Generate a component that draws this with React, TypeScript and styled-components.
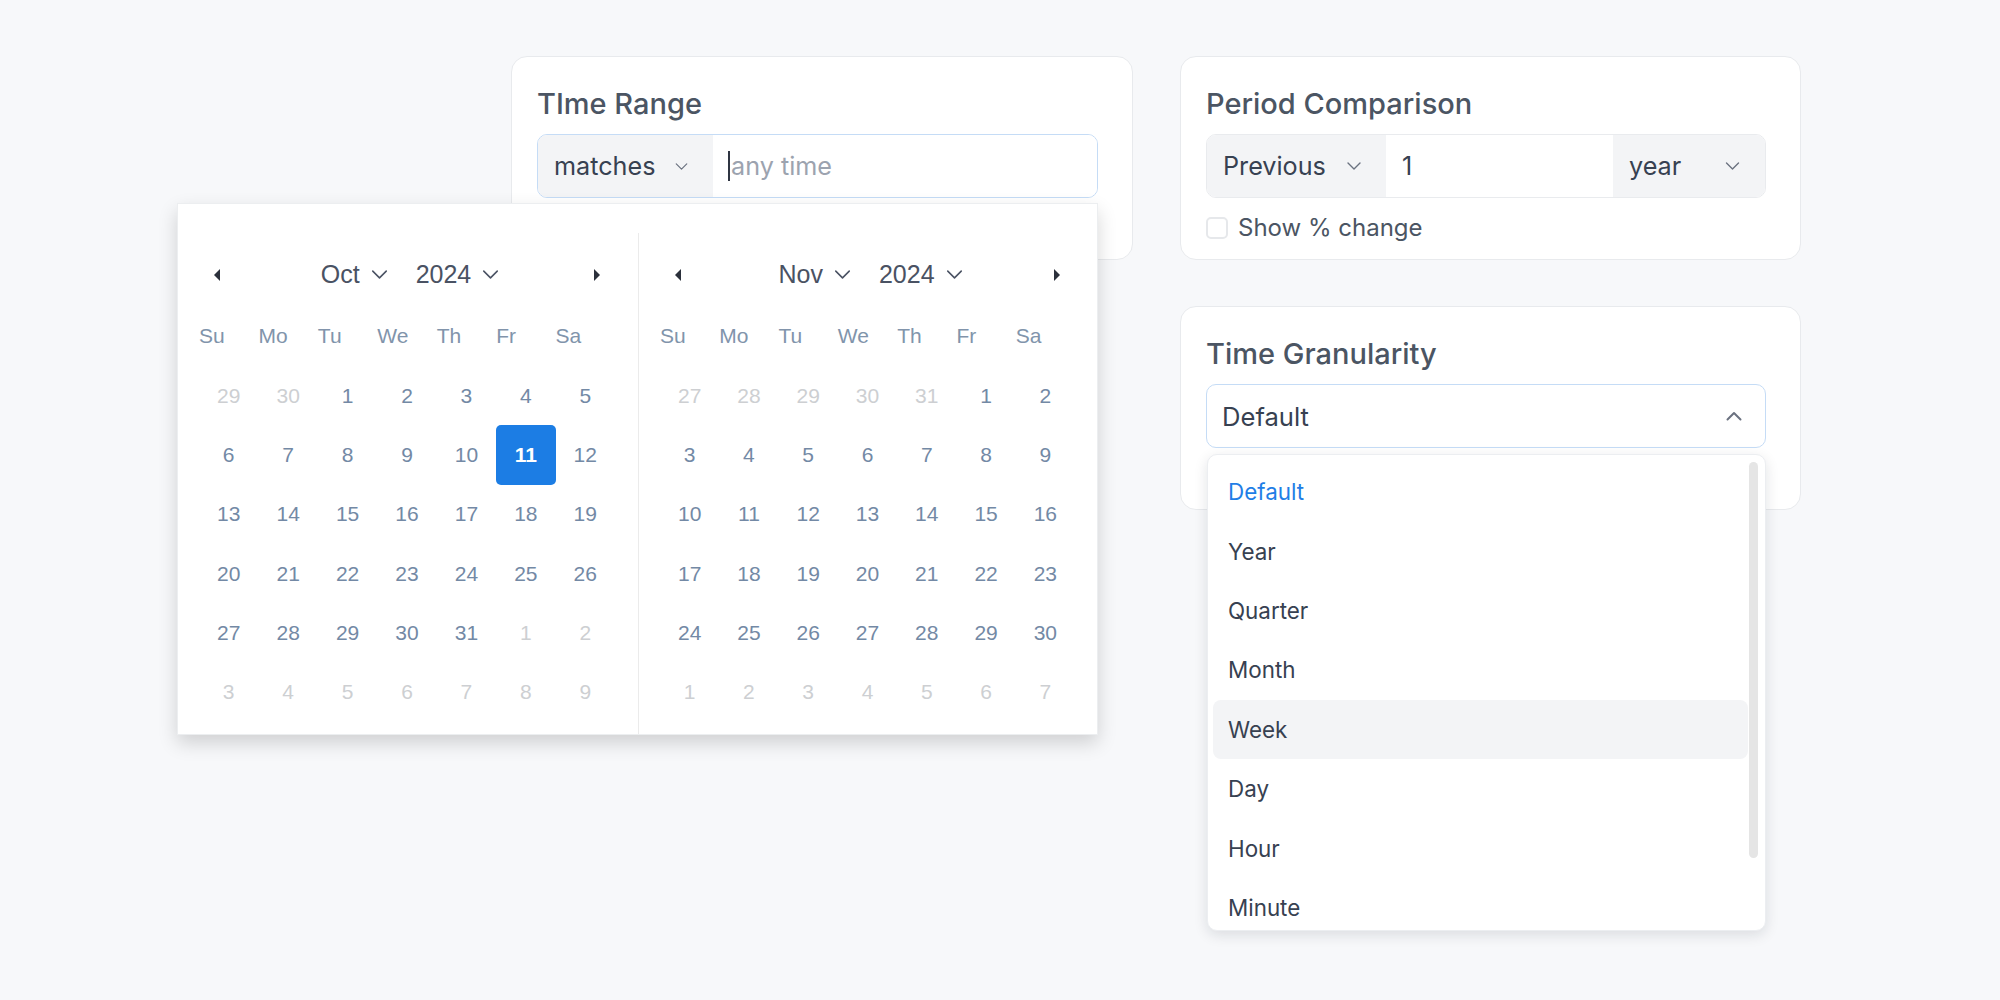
import React from "react";
import styled, { createGlobalStyle } from "styled-components";

const GlobalStyle = createGlobalStyle`
  body {
    margin: 0;
    background: #f7f8fa;
    font-family: Inter, "Noto Sans", sans-serif;
  }
`;

const Page = styled.div`
  display: grid;
  grid-template-columns: 622px 621px;
  grid-template-rows: 204px 204px;
  column-gap: 47px;
  row-gap: 46px;
  padding: 56px 0 0 511px;
  min-height: 1000px;
  box-sizing: border-box;
`;

const Card = styled.section<{ $col: number; $row: number; $front?: boolean }>`
  grid-column: ${(p) => p.$col};
  grid-row: ${(p) => p.$row};
  position: relative;
  z-index: ${(p) => (p.$front ? 5 : 1)};
  background: #fff;
  border: 1px solid #e8eaed;
  border-radius: 16px;
  padding: 27px 34px 0 25px;
  box-sizing: border-box;
`;

const CardTitle = styled.h3`
  margin: 0 0 10px;
  font-size: 29px;
  line-height: 40px;
  font-weight: 500;
  color: #4b5563;
`;

const Anchor = styled.div`
  position: relative;
`;

const InputGroup = styled.div<{ $focused?: boolean }>`
  display: flex;
  height: 64px;
  border: 1px solid ${(p) => (p.$focused ? "#c5dcf6" : "#e9ebee")};
  border-radius: 10px;
  overflow: hidden;
  box-sizing: border-box;
  font-size: 25.2px;
  color: #374151;
`;

const Segment = styled.div<{ $width: number; $grey?: boolean }>`
  width: ${(p) => p.$width}px;
  flex: none;
  display: flex;
  align-items: center;
  justify-content: space-between;
  padding: 0 25px 0 16px;
  box-sizing: border-box;
  background: ${(p) => (p.$grey ? "#f3f4f6" : "#fff")};
`;

const TextField = styled.div`
  flex: 1;
  display: flex;
  align-items: center;
  padding-left: 15px;
  background: #fff;
`;

const Caret = styled.span`
  width: 2px;
  height: 30px;
  background: #2f3542;
  margin-right: 1px;
`;

const Placeholder = styled.span`
  color: #9ca3af;
`;

const CheckRow = styled.label`
  display: flex;
  align-items: center;
  gap: 10px;
  margin-top: 14px;
  font-size: 24px;
  line-height: 32px;
  color: #4b5563;
`;

const CheckBox = styled.span`
  width: 22px;
  height: 22px;
  border: 2px solid #e6e8eb;
  border-radius: 5px;
  box-sizing: border-box;
  background: #fff;
`;

const SelectBox = styled.div`
  display: flex;
  align-items: center;
  justify-content: space-between;
  height: 64px;
  padding: 0 23px 0 15px;
  border: 1px solid #c5dcf6;
  border-radius: 10px;
  box-sizing: border-box;
  font-size: 25.6px;
  color: #374151;
`;

const Dropdown = styled.div`
  position: absolute;
  top: calc(100% + 6px);
  left: 1px;
  right: 0;
  height: 477px;
  overflow: hidden;
  background: #fff;
  border: 1px solid #eceef1;
  border-radius: 10px;
  box-shadow: 0 4px 14px rgba(17, 24, 39, 0.12);
  padding: 7px 17px 0 5px;
  box-sizing: border-box;
  z-index: 20;
`;

const Thumb = styled.div`
  position: absolute;
  top: 7px;
  right: 7px;
  width: 9px;
  height: 396px;
  border-radius: 5px;
  background: #e5e5e5;
`;

const Option = styled.div<{ $active?: boolean; $hover?: boolean }>`
  height: 59.4px;
  display: flex;
  align-items: center;
  padding-left: 15px;
  border-radius: 8px;
  font-size: 22.4px;
  color: ${(p) => (p.$active ? "#1f7ee6" : "#374151")};
  background: ${(p) => (p.$hover ? "#f3f4f6" : "transparent")};
`;

/* calendar popover */

const Popover = styled.div`
  position: absolute;
  top: calc(100% + 5px);
  right: 0;
  width: 921px;
  display: flex;
  padding-top: 29px;
  background: #fff;
  border: 1px solid #eceef0;
  box-sizing: border-box;
  box-shadow: 0 8px 18px rgba(0, 0, 0, 0.16);
  font-family: "Liberation Sans", Arial, sans-serif;
  z-index: 30;
`;

const Month = styled.div<{ $divider?: boolean }>`
  width: ${(p) => (p.$divider ? 459 : 460)}px;
  padding: 0 ${(p) => (p.$divider ? "22px 12px 21px" : "23px 12px 21px")};
  box-sizing: border-box;
  border-left: ${(p) => (p.$divider ? "1px solid #ebebeb" : "none")};
`;

const MonthHeader = styled.div`
  height: 88px;
  display: flex;
  align-items: center;
  padding: 0 15px 5px;
  box-sizing: border-box;
`;

const Arrow = styled.span<{ $dir: "left" | "right" }>`
  width: 0;
  height: 0;
  border-top: 6px solid transparent;
  border-bottom: 6px solid transparent;
  ${(p) =>
    p.$dir === "left"
      ? "border-right: 6px solid #2b303b;"
      : "border-left: 6px solid #2b303b;"}
`;

const MonthPicker = styled.div`
  flex: 1;
  display: flex;
  align-items: center;
  justify-content: center;
  padding-left: 6px;
  font-size: 25px;
  color: #4a5263;
`;

const PickerPart = styled.span`
  display: flex;
  align-items: center;
  gap: 11px;
  & + & {
    margin-left: 28px;
  }
`;

const DayGrid = styled.div`
  display: grid;
  grid-template-columns: repeat(7, 1fr);
  grid-auto-rows: 59.3px;
`;

const Weekdays = styled.div`
  display: grid;
  grid-template-columns: repeat(7, 1fr);
  height: 30px;
  margin-bottom: 15px;
  font-size: 21px;
  line-height: 30px;
  color: #8194ab;
`;

const Day = styled.div<{ $muted?: boolean; $selected?: boolean }>`
  display: flex;
  align-items: center;
  justify-content: center;
  font-size: 21px;
  border-radius: 5px;
  color: ${(p) => (p.$selected ? "#fff" : p.$muted ? "#cdcfd2" : "#7389a5")};
  background: ${(p) => (p.$selected ? "#1c7de4" : "transparent")};
  font-weight: ${(p) => (p.$selected ? 700 : 400)};
`;

const ChevronDown = ({ w = 13, color = "#6b7280" }: { w?: number; color?: string }) => (
  <svg width={w} height={Math.round(w * 0.55)} viewBox="0 0 14 8" fill="none">
    <path d="M1 1l6 6 6-6" stroke={color} strokeWidth="1.4" strokeLinecap="round" strokeLinejoin="round" />
  </svg>
);

const ChevronUp = () => (
  <svg width="16" height="10" viewBox="0 0 16 10" fill="none">
    <path d="M1.5 8.5L8 2l6.5 6.5" stroke="#6b7280" strokeWidth="2" strokeLinecap="round" strokeLinejoin="round" />
  </svg>
);

const WEEKDAYS = ["Su", "Mo", "Tu", "We", "Th", "Fr", "Sa"];
const MONTHS = ["Jan", "Feb", "Mar", "Apr", "May", "Jun", "Jul", "Aug", "Sep", "Oct", "Nov", "Dec"];

function buildMonth(year: number, month: number) {
  const first = new Date(year, month, 1).getDay();
  const total = new Date(year, month + 1, 0).getDate();
  const prevTotal = new Date(year, month, 0).getDate();
  return Array.from({ length: 42 }, (_, i) => {
    const d = i - first + 1;
    if (d < 1) return { day: prevTotal + d, muted: true };
    if (d > total) return { day: d - total, muted: true };
    return { day: d, muted: false };
  });
}

function CalendarMonth({ year, month, selected, divider }: { year: number; month: number; selected?: number; divider?: boolean }) {
  const cells = buildMonth(year, month);
  return (
    <Month $divider={divider}>
      <MonthHeader>
        <Arrow $dir="left" />
        <MonthPicker>
          <PickerPart>
            {MONTHS[month]}
            <ChevronDown w={17} color="#4a5263" />
          </PickerPart>
          <PickerPart>
            {year}
            <ChevronDown w={17} color="#4a5263" />
          </PickerPart>
        </MonthPicker>
        <Arrow $dir="right" />
      </MonthHeader>
      <Weekdays>
        {WEEKDAYS.map((w) => (
          <span key={w}>{w}</span>
        ))}
      </Weekdays>
      <DayGrid>
        {cells.map((c, i) => (
          <Day key={i} $muted={c.muted} $selected={!c.muted && c.day === selected}>
            {c.day}
          </Day>
        ))}
      </DayGrid>
    </Month>
  );
}

const OPTIONS = ["Default", "Year", "Quarter", "Month", "Week", "Day", "Hour", "Minute"];

export default function App() {
  return (
    <>
      <GlobalStyle />
      <Page>
        <Card $col={1} $row={1} $front>
          <CardTitle>TIme Range</CardTitle>
          <Anchor>
            <InputGroup $focused>
              <Segment $width={175} $grey>
                matches
                <ChevronDown />
              </Segment>
              <TextField>
                <Caret />
                <Placeholder>any time</Placeholder>
              </TextField>
            </InputGroup>
            <Popover>
              <CalendarMonth year={2024} month={9} selected={11} />
              <CalendarMonth year={2024} month={10} divider />
            </Popover>
          </Anchor>
        </Card>

        <Card $col={2} $row={1}>
          <CardTitle>Period Comparison</CardTitle>
          <InputGroup>
            <Segment $width={179} $grey>
              Previous
              <ChevronDown w={14} />
            </Segment>
            <Segment $width={227}>1</Segment>
            <Segment $width={156} $grey style={{ flex: 1 }}>
              year
              <ChevronDown w={15} />
            </Segment>
          </InputGroup>
          <CheckRow>
            <CheckBox />
            Show % change
          </CheckRow>
        </Card>

        <Card $col={2} $row={2} $front>
          <CardTitle>Time Granularity</CardTitle>
          <Anchor>
            <SelectBox>
              Default
              <ChevronUp />
            </SelectBox>
            <Dropdown>
              <Thumb />
              {OPTIONS.map((o) => (
                <Option key={o} $active={o === "Default"} $hover={o === "Week"}>
                  {o}
                </Option>
              ))}
            </Dropdown>
          </Anchor>
        </Card>
      </Page>
    </>
  );
}
